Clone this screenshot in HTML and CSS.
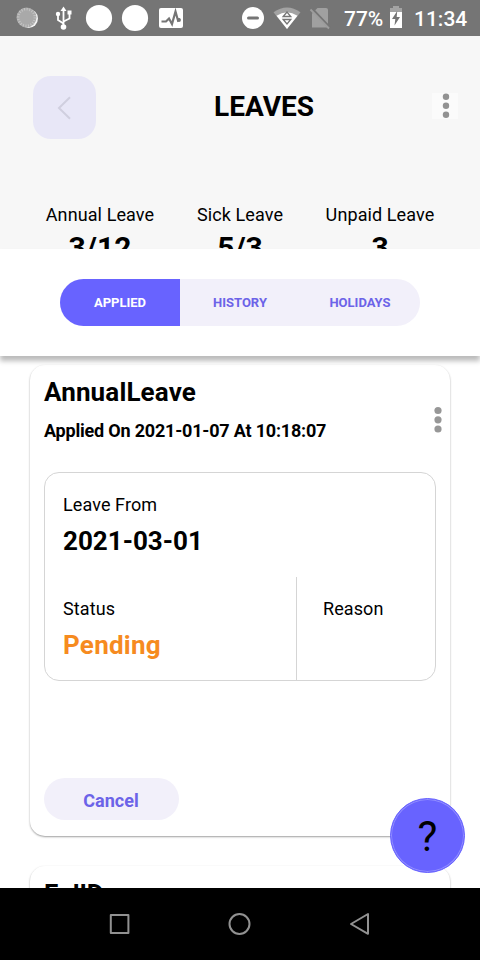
FILE: index.html
```html
<!DOCTYPE html>
<html lang="en">
<head>
<meta charset="utf-8">
<title>Leaves</title>
<link rel="stylesheet" href="styles.css">
</head>
<body>
<div class="screen">
  <div class="statusbar">
    <svg class="status-icons" width="190" height="36" viewBox="0 0 190 36">
      <circle cx="28.500" cy="18.500" r="9.500" fill="#f4f4f4"/>
      <circle cx="26.500" cy="17.500" r="10" fill="#a9a9a9"/>
      <circle cx="26.500" cy="17.500" r="8.300" fill="none" stroke="#c4c4c4" stroke-width="2.600" stroke-dasharray="1 1.600"/>
      <g stroke="#fff" stroke-width="1.800" fill="none">
        <path d="M63.500 26V9"/>
        <path d="M63.500 23.500L58 20V15.500"/>
        <path d="M63.500 21.500L69.500 18.500V14"/>
      </g>
      <path d="M63.500 6.500L66.500 11H60.500Z" fill="#fff"/>
      <circle cx="63.500" cy="27" r="2.800" fill="#fff"/>
      <circle cx="58" cy="14" r="2.200" fill="#fff"/>
      <rect x="67.500" y="10.500" width="4" height="4" fill="#fff"/>
      <circle cx="99" cy="18" r="13.100" fill="#fff"/>
      <circle cx="135" cy="18" r="13.100" fill="#fff"/>
      <rect x="159" y="8" width="24" height="20" rx="2" fill="#fff"/>
      <path d="M161.500 21.500H166L169 18.500L172 24L175.500 11.500L178 20.500L180 19" fill="none" stroke="#757575" stroke-width="2.200"/>
      <circle cx="179" cy="20" r="1.900" fill="#757575"/>
    </svg>
    <svg class="status-icons" width="100" height="36" viewBox="240 0 100 36">
      <circle cx="253" cy="18" r="11" fill="#fff"/>
      <path d="M248.500 18H257.500" stroke="#757575" stroke-width="3" stroke-linecap="round"/>
      <path d="M273.500 12.300Q287 2.500 300.500 12.300L287 29Z" fill="#a3a3a3"/>
      <path d="M276.500 15.800Q287 8.500 297.500 15.800L287 29Z" fill="#fff"/>
      <g fill="none" stroke="#757575" stroke-width="1.300">
        <path d="M283.200 16.500L287 12L290.800 16.500Z"/>
        <path d="M283.200 19.500L287 24L290.800 19.500Z"/>
      </g>
      <path d="M317.500 8H326Q328 8 328 10V27.500H312V13.500Z" fill="#a0a0a0"/>
      <path d="M311.500 8.500L330 28" stroke="#757575" stroke-width="3"/>
      <path d="M310.500 9.500L329 28.500" stroke="#9d9d9d" stroke-width="1.800"/>
    </svg>
    <span class="battery-text">77%</span>
    <svg class="battery" width="12" height="24" viewBox="0 0 12 24">
      <path d="M3 1H9V3H12V8H0V3H3Z" fill="#a3a3a3"/>
      <path d="M0 7H12V23H0Z" fill="#fff"/>
      <path d="M7.200 6L2 14H5.300L4.500 20.500L10 12H6.700Z" fill="#757575"/>
    </svg>
    <span class="clock">11:34</span>
  </div>

  <header class="header">
    <div class="topbar">
      <div class="back">
        <svg width="63" height="63" viewBox="0 0 63 63"><path d="M37 21.300L26 32L37 42.700" fill="none" stroke="#d0cfdf" stroke-width="2"/></svg>
      </div>
      <h1 class="title">LEAVES</h1>
      <div class="more">
        <svg width="26" height="26" viewBox="0 0 26 26"><g fill="#929292"><circle cx="14" cy="3.700" r="3.200"/><circle cx="14" cy="12.700" r="3.200"/><circle cx="14" cy="21.700" r="3.200"/></g></svg>
      </div>
    </div>
    <div class="stats">
      <div class="stat"><span class="label">Annual Leave</span><span class="count">3/12</span></div>
      <div class="stat"><span class="label">Sick Leave</span><span class="count">5/3</span></div>
      <div class="stat"><span class="label">Unpaid Leave</span><span class="count">3</span></div>
    </div>
  </header>

  <nav class="tabs">
    <div class="segmented">
      <div class="tab active">APPLIED</div>
      <div class="tab">HISTORY</div>
      <div class="tab">HOLIDAYS</div>
    </div>
  </nav>

  <main class="list">
    <article class="card">
      <div class="card-head">
        <div>
          <h2 class="name">AnnualLeave</h2>
          <p class="applied">Applied On 2021-01-07 At 10:18:07</p>
        </div>
        <svg class="card-more" width="8" height="28" viewBox="0 0 8 28"><g fill="#979797"><circle cx="4" cy="4.500" r="3.600"/><circle cx="4" cy="13.800" r="3.600"/><circle cx="4" cy="23" r="3.600"/></g></svg>
      </div>
      <div class="details">
        <div class="from">
          <span class="label">Leave From</span>
          <span class="value">2021-03-01</span>
        </div>
        <div class="row">
          <div class="status">
            <span class="label">Status</span>
            <span class="value pending">Pending</span>
          </div>
          <div class="reason"><span class="label">Reason</span></div>
        </div>
      </div>
      <div class="cancel">Cancel</div>
    </article>
    <article class="card next">
      <h2 class="name">FullDay</h2>
    </article>
  </main>

  <div class="help">?</div>

  <footer class="navbar">
    <svg width="480" height="72" viewBox="0 0 480 72">
      <g fill="none" stroke="#919191" stroke-width="2" stroke-linejoin="round">
        <rect x="110.800" y="27" width="17.600" height="18"/>
        <circle cx="239.500" cy="36" r="10"/>
        <path d="M368 26V45.800L351 36Z"/>
      </g>
    </svg>
  </footer>
</div>
</body>
</html>
```

FILE: styles.css
```css
* { box-sizing: border-box; }

body {
  margin: 0;
  font-family: Roboto, "Liberation Sans", sans-serif;
  color: #000;
}

h1, h2, p { margin: 0; }
svg { display: block; }

.screen {
  position: relative;
  display: flex;
  flex-direction: column;
  width: 480px;
  height: 960px;
  overflow: hidden;
  background: #fff;
}

.statusbar {
  display: flex;
  flex: none;
  height: 36px;
  background: #757575;
  color: #fff;
  font-size: 21px;
  font-weight: 500;
  line-height: 38px;
}
.status-icons { flex: none; }
.status-icons + .status-icons { margin-left: 50px; }
.battery-text { width: 46px; margin-left: 4px; }
.battery { margin-top: 5px; }
.clock { margin-left: 12px; }

.header {
  flex: none;
  height: 213px;
  overflow: hidden;
  background: #f7f7f7;
}
.topbar {
  display: flex;
  align-items: center;
  justify-content: space-between;
  height: 63px;
  margin: 40px 22px 0 33px;
}
.back {
  width: 63px;
  height: 63px;
  border-radius: 18px;
  background: #e8e7f7;
}
.title {
  margin: 0 0 2px;
  font-size: 28px;
  line-height: 32px;
  font-weight: 700;
}
.more {
  width: 26px;
  height: 26px;
  margin-bottom: 4px;
  background: #fbfbfb;
}
.stats {
  display: grid;
  grid-template-columns: repeat(3, 1fr);
  margin: 65px 30px 0;
}
.stat {
  display: flex;
  flex-direction: column;
  align-items: center;
}
.label {
  font-size: 18px;
  line-height: 22px;
  letter-spacing: 0.1px;
}
.count {
  margin-top: 6px;
  font-size: 30px;
  line-height: 32px;
  font-weight: 700;
}

.tabs {
  flex: none;
  position: relative;
  height: 107px;
  padding: 30px 60px 0;
  background: #fff;
  box-shadow: 0 5px 5px rgba(0, 0, 0, 0.27);
}
.segmented {
  display: flex;
  height: 47px;
  overflow: hidden;
  border-radius: 23.5px;
  background: #f2f0fa;
}
.tab {
  flex: 1;
  color: #6c63e8;
  font-size: 13px;
  font-weight: 700;
  line-height: 47px;
  text-align: center;
}
.tab.active {
  background: #6863ff;
  color: #fff;
}

.list {
  flex: 1;
  min-height: 0;
  overflow: hidden;
  padding: 9px 30px 0;
}
.card {
  height: 471px;
  padding: 12px 14px 0;
  margin-bottom: 30px;
  border-radius: 15px;
  background: #fff;
  box-shadow: 0 1px 2px rgba(0, 0, 0, 0.38);
}
.card.next { padding-top: 13px; }
.card-head {
  display: flex;
  justify-content: space-between;
  height: 95px;
}
.name {
  font-size: 26px;
  line-height: 30px;
  font-weight: 700;
  letter-spacing: 0.14px;
}
.applied {
  margin-top: 13px;
  font-size: 18px;
  line-height: 22px;
  font-weight: 700;
  letter-spacing: -0.2px;
}
.card-more {
  margin: 29px -6px 0 0;
}
.details {
  height: 209px;
  border: 1px solid #d5d5d5;
  border-radius: 15px;
}
.from {
  display: flex;
  flex-direction: column;
  height: 104px;
  padding: 21px 18px 0;
}
.value {
  margin-top: 10px;
  font-size: 26px;
  line-height: 30px;
  font-weight: 700;
}
.pending {
  color: #f68b1f;
  letter-spacing: 0.25px;
}
.row {
  display: flex;
  height: 103px;
}
.status {
  display: flex;
  flex-direction: column;
  width: 252px;
  padding: 21px 18px 0;
  border-right: 1px solid #d5d5d5;
}
.reason { padding: 21px 26px 0; }
.cancel {
  width: 135px;
  height: 42px;
  margin-top: 97px;
  padding-right: 1px;
  border-radius: 21px;
  background: #f2f0fa;
  color: #6c63e8;
  font-size: 18px;
  font-weight: 700;
  line-height: 45px;
  text-align: center;
}

.help {
  position: absolute;
  right: 15px;
  bottom: 87px;
  width: 75px;
  height: 75px;
  border: 1px solid #6863ff;
  border-radius: 50%;
  background: #6863ff;
  box-shadow: inset 0 0 0 1px #918dff;
  font-size: 42px;
  line-height: 75px;
  text-align: center;
}

.navbar {
  flex: none;
  height: 72px;
  background: #000;
}
```
